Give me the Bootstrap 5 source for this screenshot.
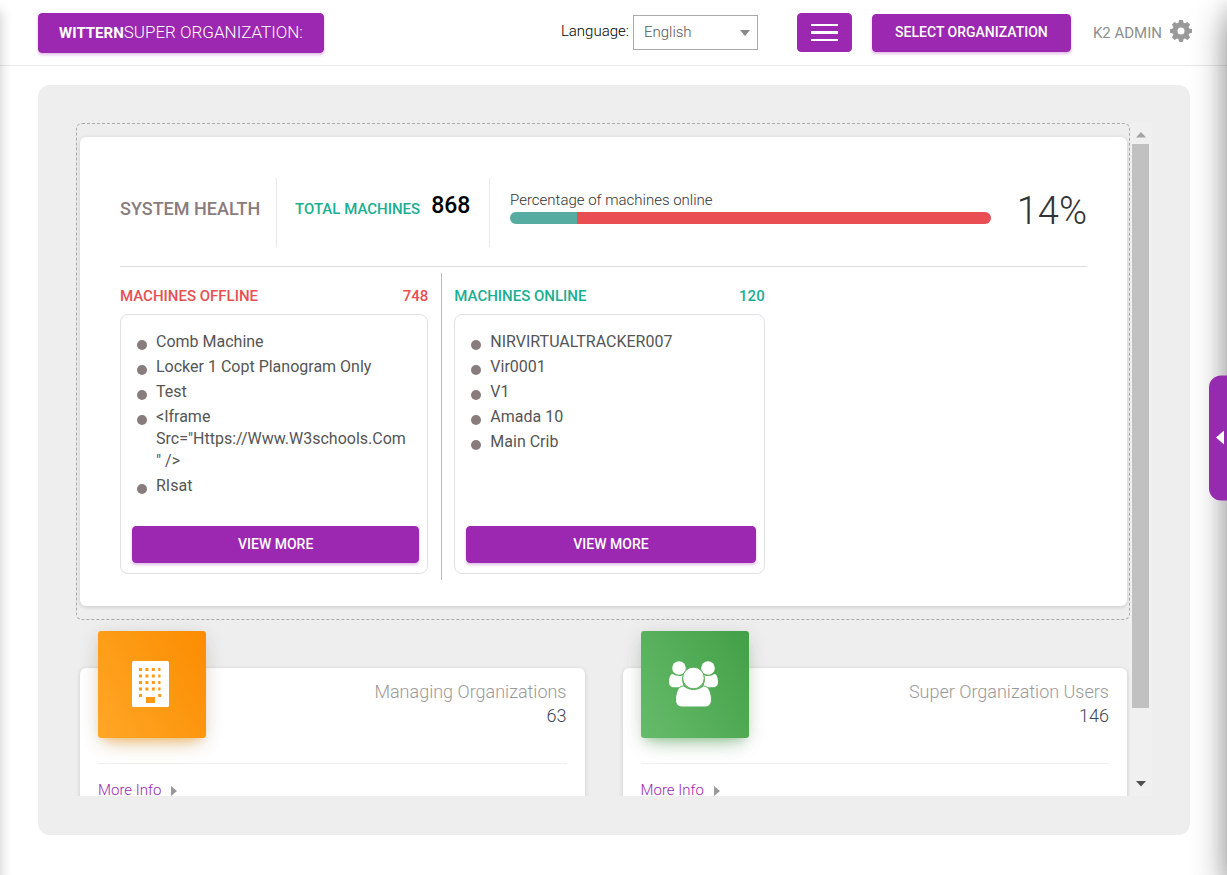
<!DOCTYPE html>
<html lang="en">
<head>
<meta charset="utf-8">
<meta name="viewport" content="width=device-width, initial-scale=1">
<title>Super Organization Dashboard</title>
<link href="https://cdn.jsdelivr.net/npm/bootstrap@5.3.0/dist/css/bootstrap.min.css" rel="stylesheet">
<style>
  body { font-family: Roboto, "Liberation Sans", sans-serif; font-size: 15px; font-weight: 300; line-height: 22px; color: #333; background: #fff; }
  .topbar { height: 66px; padding: 0 35px 0 38px; border-bottom: 1px solid #e9e9e9; }
  .purple { --bs-btn-bg: #9c27b0; --bs-btn-border-color: #9c27b0; --bs-btn-color: #fff; --bs-btn-hover-color: #fff; --bs-btn-hover-bg: #8b1fa0; --bs-btn-hover-border-color: #8b1fa0; --bs-btn-border-radius: 4px; --bs-btn-font-size: 14px; --bs-btn-font-weight: 500; box-shadow: 0 2px 3px rgba(156,39,176,.3); }
  .brand-btn { width: 286px; height: 40px; padding: 0; font-size: 17px; font-weight: 300; line-height: 36px; }
  .brand-btn strong { font-size: 15px; font-weight: 700; }
  .lang-label { color: #000; padding-bottom: 3px; }
  .lang-select { width: 125px; height: 35px; padding: 0 10px; font-size: 15px; font-weight: 300; color: #555; border: 1px solid #aaa; border-radius: 0; background: #fff url("data:image/svg+xml,%3Csvg xmlns='http://www.w3.org/2000/svg' width='10' height='6'%3E%3Cpath d='M0 0h10L5 6z' fill='%23888'/%3E%3C/svg%3E") no-repeat right 7px center / 10px 6px; }
  .menu-btn { width: 55px; height: 39px; margin-left: 39px; box-shadow: none; }
  .org-btn { width: 199px; height: 38px; margin-left: 20px; }
  .user-link { margin-left: 22px; color: #8e8e8e; font-weight: 400; }
  .panel { margin: 19px 37px 40px 38px; padding: 38px 38px 39px; background: #eee; border-radius: 12px; }
  .viewport-area { overflow: hidden; }
  .dropzone { border: 1px dashed #aaa; border-radius: 6px; padding: 13px 2px 13px 3px; }
  .sheet { background: #fff; border-radius: 6px; box-shadow: 0 1px 4px rgba(0,0,0,.16); }
  .health { padding: 41px 40px 26px; }
  .health-row { height: 69px; }
  .health-row > div { height: 100%; }
  .health-title { width: 157px; color: #897c7c; font-size: 18px; font-weight: 500; padding-top: 20px; border-right: 1px solid #e9e9e9; }
  .total { width: 213px; gap: 11px; padding: 17px 0 0 18px; border-right: 1px solid #e9e9e9; }
  .total .green-text { padding-top: 3px; }
  .green-text { color: #1aae92; font-weight: 500; }
  .red-text { color: #e84e52; font-weight: 500; }
  .total-num { color: #000; font-size: 23px; font-weight: 500; }
  .meter { padding: 11px 26px 0 20px; }
  .meter .progress { height: 12px; border-radius: 6px; margin-top: 1px; }
  .meter .done { background: #56aca0; }
  .meter .rest { background: #e84e52; }
  .percent { font-size: 38px; line-height: 66px; }
  .groups { margin-top: 19px; padding-top: 6px; border-top: 1px solid #ddd; }
  .group-col { height: 307px; padding-top: 12px; }
  .group-off { border-right: 1px solid #bbb; padding-right: 13px; }
  .group-on { padding-left: 12px; }
  .listbox { height: 260px; margin-top: 7px; padding: 16px 8px 10px 11px; border: 1px solid #dee2e6; border-radius: 8px; }
  .machines { margin: 0; padding: 0 10px 0 5px; list-style: none; font-size: 16px; font-weight: 400; color: #555; }
  .machines li { display: flex; gap: 9px; margin-bottom: 3px; }
  .machines li::before { content: ""; flex: none; width: 10px; height: 10px; margin-top: 9px; border-radius: 50%; background: #897c7c; }
  .machines span { word-break: break-word; }
  .view-btn { height: 37px; }
  .stats { padding: 11px 3px 0 4px; gap: 38px; }
  .stat { flex: 1 1 0; margin-top: 37px; padding: 0 18px; height: 150px; }
  .stat-head { height: 96px; border-bottom: 1px solid #eee; }
  .tile { width: 108px; height: 107px; margin-top: -37px; border-radius: 3px; padding: 0 3px 2px 0; }
  .tile-orange { background: linear-gradient(60deg, #ffa726, #fb8c00); box-shadow: 0 12px 20px -10px rgba(255,152,0,.4), 0 4px 20px rgba(0,0,0,.12), 0 7px 8px -5px rgba(255,152,0,.3); }
  .tile-green { background: linear-gradient(60deg, #66bb6a, #43a047); box-shadow: 0 12px 20px -10px rgba(76,175,80,.4), 0 4px 20px rgba(0,0,0,.12), 0 7px 8px -5px rgba(76,175,80,.3); }
  .stat-text { padding-top: 12px; font-size: 18px; line-height: 24px; color: #999; }
  .stat-text b { font-weight: 300; color: #3c4858; }
  .more { padding-top: 15px; }
  .more a { color: #9c27b0; }
  .more svg { margin-left: 6px; }
  .scroller { width: 22px; padding: 9px 3px 9px 2px; background: #f0f0f0; }
  .scroll-thumb { width: 17px; height: 564px; margin-top: 6px; background: #c1c1c1; }
  .edge { position: fixed; top: 0; bottom: 0; width: 260px; pointer-events: none; }
  .edge-left { right: 100%; box-shadow: 0 10px 12px rgba(0,0,0,.22); }
  .edge-right { left: 100%; box-shadow: 0 16px 34px rgba(0,0,0,.4), 0 4px 22px rgba(0,0,0,.12); }
  .drawer-tab { position: fixed; top: 50%; right: 0; width: 18px; height: 125px; transform: translateY(-50%); border: 0; padding: 0 0 0 3px; border-radius: 12px 0 0 12px; background: #952bae; }
</style>
</head>
<body class="vh-100 d-flex flex-column overflow-hidden">
<header class="topbar d-flex align-items-center flex-shrink-0">
  <button type="button" class="btn purple brand-btn text-nowrap flex-shrink-0"><strong>WITTERN</strong>SUPER ORGANIZATION:</button>
  <label for="lang" class="lang-label ms-auto me-1">Language:</label>
  <select id="lang" class="form-select lang-select"><option>English</option><option>Spanish</option></select>
  <button type="button" class="btn purple menu-btn p-0 flex-shrink-0" aria-label="Menu">
    <svg class="d-block mx-auto" width="27" height="17" viewBox="0 0 27 17" fill="#fff"><path d="M0 0h27v2H0zM0 7h27v3H0zM0 15h27v2H0z"/></svg>
  </button>
  <button type="button" class="btn purple org-btn p-0 flex-shrink-0">SELECT ORGANIZATION</button>
  <a href="#" class="user-link d-flex align-items-center gap-2 text-decoration-none text-nowrap">K2 ADMIN
    <svg class="mb-1" width="22" height="22" viewBox="-11 -11 22 22" fill="#999"><circle r="6" fill="none" stroke="#999" stroke-width="5"/>
      <path id="tooth" d="M-2.8-7.5-1.8-11h3.6l1 3.500z"/><use href="#tooth" transform="rotate(45)"/><use href="#tooth" transform="rotate(90)"/><use href="#tooth" transform="rotate(135)"/><use href="#tooth" transform="rotate(180)"/><use href="#tooth" transform="rotate(225)"/><use href="#tooth" transform="rotate(270)"/><use href="#tooth" transform="rotate(315)"/></svg>
  </a>
</header>

<main class="panel d-flex flex-fill overflow-hidden">
  <div class="viewport-area flex-fill">
    <div class="dropzone">
      <section class="sheet health">
        <div class="health-row d-flex">
          <div class="health-title text-nowrap flex-shrink-0">SYSTEM HEALTH</div>
          <div class="total d-flex align-items-start text-nowrap flex-shrink-0"><span class="green-text">TOTAL MACHINES</span><span class="total-num">868</span></div>
          <div class="meter flex-fill">Percentage of machines online
            <div class="progress"><div class="progress-bar done" style="width:14%"></div><div class="progress-bar rest" style="width:86%"></div></div>
          </div>
          <div class="percent">14%</div>
        </div>
        <div class="groups row g-0">
          <div class="col-4 group-col group-off">
            <div class="d-flex justify-content-between red-text"><span>MACHINES OFFLINE</span><span>748</span></div>
            <div class="listbox d-flex flex-column">
              <ul class="machines">
                <li><span>Comb Machine</span></li>
                <li><span>Locker 1 Copt Planogram Only</span></li>
                <li><span>Test</span></li>
                <li><span>&lt;Iframe Src="Https://Www.W3schools.Com" /&gt;</span></li>
                <li><span>RIsat</span></li>
              </ul>
              <button type="button" class="btn purple view-btn p-0 mt-auto">VIEW MORE</button>
            </div>
          </div>
          <div class="col-4 group-col group-on">
            <div class="d-flex justify-content-between green-text"><span>MACHINES ONLINE</span><span>120</span></div>
            <div class="listbox d-flex flex-column">
              <ul class="machines">
                <li><span>NIRVIRTUALTRACKER007</span></li>
                <li><span>Vir0001</span></li>
                <li><span>V1</span></li>
                <li><span>Amada 10</span></li>
                <li><span>Main Crib</span></li>
              </ul>
              <button type="button" class="btn purple view-btn p-0 mt-auto">VIEW MORE</button>
            </div>
          </div>
        </div>
      </section>
    </div>

    <div class="stats d-flex">
      <section class="sheet stat">
        <div class="stat-head d-flex justify-content-between">
          <div class="tile tile-orange d-flex align-items-center justify-content-center flex-shrink-0">
            <svg width="37" height="46" viewBox="0 0 37 46"><rect width="37" height="46" rx="1.5" fill="#fff"/>
              <path d="M8.500 8.500H30M8.500 15H30M8.500 21.500H30M8.500 28H30" transform="translate(-1.500 0)" stroke="#fe9a14" stroke-width="3" stroke-dasharray="3 3.400"/>
              <path d="M7 33h3v3H7zM26.200 33h3v3h-3zM14 36h9v6h-9z" fill="#fe9a14"/></svg>
          </div>
          <div class="stat-text text-end">Managing Organizations<br><b>63</b></div>
        </div>
        <div class="more"><a href="#" class="text-decoration-none">More Info</a> <svg width="6" height="10" viewBox="0 0 6 10" fill="#999"><path d="M0 0l6 5-6 5z"/></svg></div>
      </section>
      <section class="sheet stat">
        <div class="stat-head d-flex justify-content-between">
          <div class="tile tile-green d-flex align-items-center justify-content-center flex-shrink-0">
            <svg width="49" height="46" viewBox="0 0 49 46" fill="#fff"><circle cx="10" cy="7" r="6.800"/><circle cx="39" cy="7" r="6.800"/>
              <path d="M3.500 13c2 1 4 2 7 2 1.500 0 2.500-.3 3.500-.7-1.500 4-1 8.200 1.500 12H5c-3 0-5-2-5-5 0-4 1-8 3.500-8.300zM45.500 13c-2 1-4 2-7 2-1.500 0-2.500-.3-3.500-.7 1.500 4 1 8.200-1.500 12h10.500c3 0 5-2 5-5 0-4-1-8-3.500-8.300z"/>
              <path d="M14.500 25c2.500 1.500 5.500 3.500 10 3.500s7.500-2 10-3.500c6 0 8 8 8 14 0 4-2.500 7-6.500 7H13c-4 0-6.500-3-6.500-7 0-6 2-14 8-14z" stroke="#54ad57" stroke-width="1"/>
              <circle cx="24.500" cy="17" r="10.800" stroke="#54ad57" stroke-width="1"/></svg>
          </div>
          <div class="stat-text text-end">Super Organization Users<br><b>146</b></div>
        </div>
        <div class="more"><a href="#" class="text-decoration-none">More Info</a> <svg width="6" height="10" viewBox="0 0 6 10" fill="#999"><path d="M0 0l6 5-6 5z"/></svg></div>
      </section>
    </div>
  </div>
  <div class="scroller d-flex flex-column align-items-center flex-shrink-0">
    <svg class="flex-shrink-0" width="10" height="6" viewBox="0 0 10 6" fill="#a3a3a3"><path d="M0 5.500h10L5 0z"/></svg>
    <div class="scroll-thumb"></div>
    <svg class="mt-auto flex-shrink-0" width="10" height="6" viewBox="0 0 10 6" fill="#505050"><path d="M0 0h10L5 5.500z"/></svg>
  </div>
</main>

<div class="edge edge-left"></div>
<div class="edge edge-right"></div>
<button type="button" class="drawer-tab d-flex align-items-center justify-content-center" aria-label="Open drawer"><svg width="8" height="14" viewBox="0 0 8 14" fill="#fff"><path d="M8 0v14L0 7z"/></svg></button>
<script src="https://cdn.jsdelivr.net/npm/bootstrap@5.3.0/dist/js/bootstrap.bundle.min.js"></script>
</body>
</html>
